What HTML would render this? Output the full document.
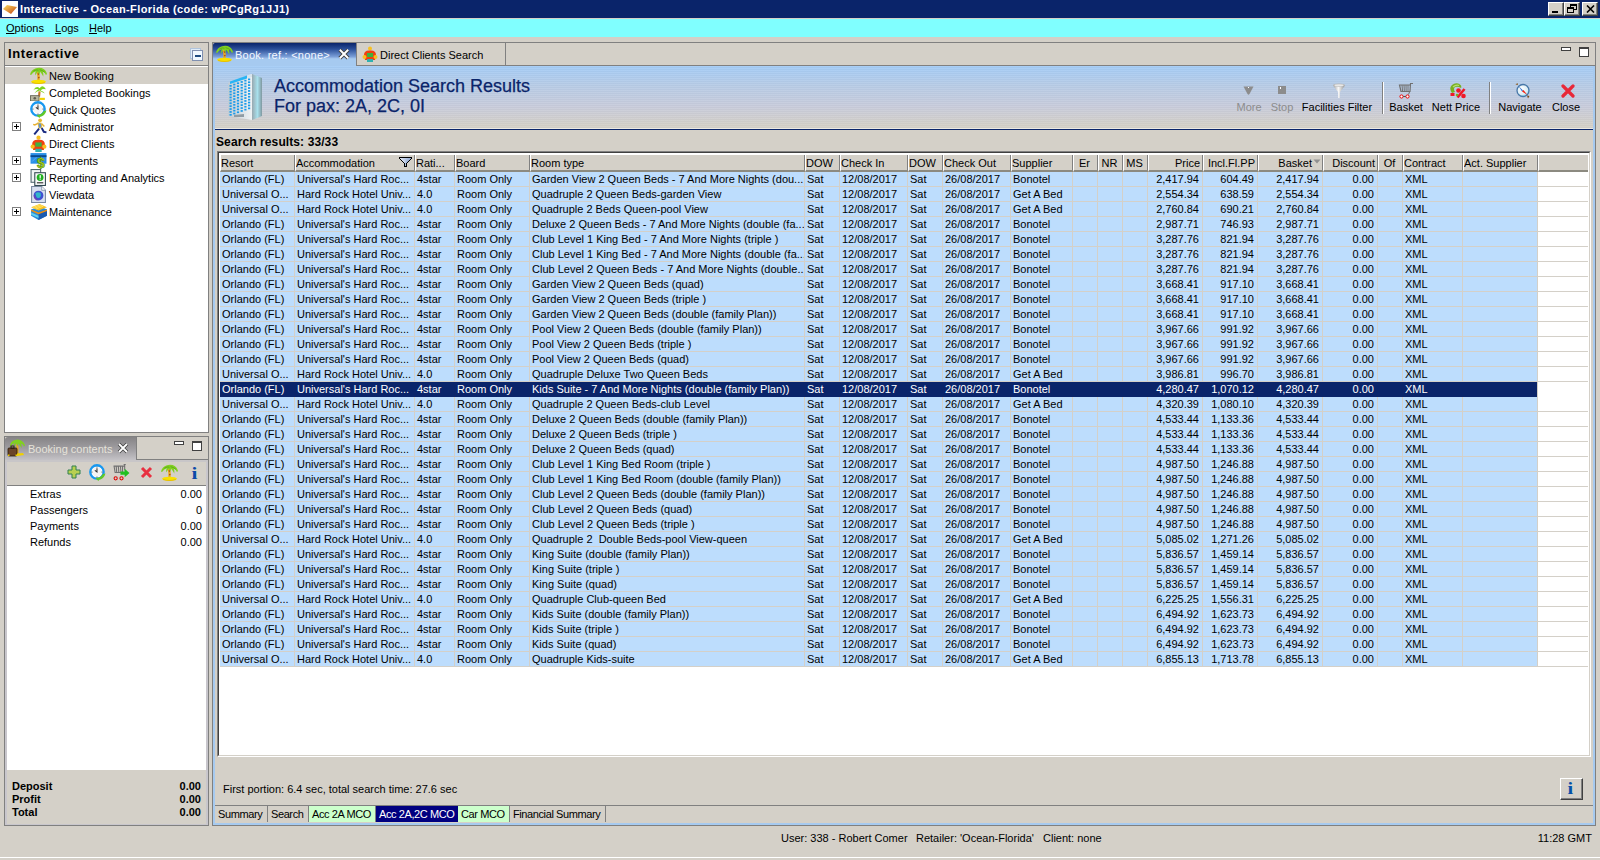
<!DOCTYPE html>
<html><head><meta charset="utf-8"><title>Interactive</title>
<style>
*{margin:0;padding:0;box-sizing:border-box}
html,body{width:1600px;height:860px;overflow:hidden}
body{position:relative;background:#D4D0C8;font-family:"Liberation Sans",sans-serif;font-size:11px;color:#000;line-height:14px}
.a{position:absolute}
i,em{font-style:normal}
u{text-decoration:underline}
/* title bar */
#tb{left:0;top:0;width:1600px;height:18px;background:#0A246A}
#tt{left:20px;top:2px;color:#fff;font-weight:bold;font-size:11px;letter-spacing:0.4px;white-space:nowrap}
.wb{top:2px;width:16px;height:14px;background:#D4D0C8;border-top:1px solid #fff;border-left:1px solid #fff;border-right:1px solid #404040;border-bottom:1px solid #404040;box-shadow:inset -1px -1px 0 #808080}
#mb{left:0;top:19px;width:1600px;height:18px;background:#80FFFF}
.mi{top:21px;white-space:nowrap}
/* panels */
.pb{border:1px solid #808080}
#p1{left:4px;top:42px;width:205px;height:391px;background:#D4D0C8}
#p1h{left:8px;top:47px;font-weight:bold;font-size:13px;letter-spacing:0.6px}
#tree{left:5px;top:65px;width:203px;height:367px;background:#fff;border-top:1px solid #808080}
.ti{left:49px;white-space:nowrap;line-height:14px}
.pl{left:12px;width:9px;height:9px;border:1px solid #808080;background:#fff}
.pl:before{content:"";position:absolute;left:1px;top:3px;width:5px;height:1px;background:#000}
.pl:after{content:"";position:absolute;left:3px;top:1px;width:1px;height:5px;background:#000}
#p2{left:4px;top:436px;width:205px;height:390px;background:#D4D0C8}
/* editor */
#ed{left:212px;top:42px;width:1384px;height:784px;background:#D4D0C8}
#edin{left:213px;top:66px;width:1382px;height:759px;border-left:2px solid #A6CAF0;border-right:2px solid #A6CAF0;border-bottom:2px solid #A6CAF0}
#hdrg{left:215px;top:66px;width:1378px;height:63px;background:linear-gradient(#A4CCF6 0px,#B8CCE6 20px,#C8CCDC 40px,#D4D0C8 60px)}
#hdrg:after{content:"";position:absolute;left:0;top:0;right:0;bottom:0;background:repeating-linear-gradient(rgba(255,255,255,0.06) 0 1px,rgba(0,0,0,0.02) 1px 2px)}
.tl{color:#0A246A;font-size:18px;white-space:nowrap;line-height:20px;-webkit-text-stroke:0.25px #0A246A}
.tbt{top:100px;white-space:nowrap;text-align:center}
/* table */
#tbl{left:217px;top:151px;width:1374px;height:606px;background:#fff;border-top:1px solid #808080;border-left:1px solid #808080;border-right:1px solid #fff;border-bottom:1px solid #fff}
#tbli{position:absolute;left:0;top:0;width:1372px;height:604px;border-top:1px solid #404040;border-left:1px solid #404040;border-right:1px solid #D4D0C8;border-bottom:1px solid #D4D0C8}
#thead{left:220px;top:154px;width:1368px;height:18px}
.h{position:absolute;top:0;height:18px;background:#D4D0C8;border-top:1px solid #fff;border-left:1px solid #fff;border-bottom:2px solid #8C8A80;padding:1px 3px 0 0;white-space:nowrap;overflow:hidden;line-height:14px}
.h:after{content:"";position:absolute;right:0;top:0;width:1px;bottom:0;background:#808080}
#rows{left:220px;top:172px;width:1368px;height:495px}
.row{position:absolute;left:0;width:1368px;height:15px;background:linear-gradient(90deg,#BDDDFD 1317px,#fff 1317px);border-bottom:1px solid #D4D0C8}
.row i{position:absolute;top:0;height:14px;padding:1px 3px 0 2px;white-space:nowrap;overflow:hidden;line-height:13px}
.row.sel{width:1317px;background:#0A246A;color:#fff;border-bottom-color:#0A246A;z-index:2}
#vg b{position:absolute;top:0;width:1px;height:495px;background:#D4D0C8;z-index:1}
.l{text-align:left}.r{text-align:right}.c{text-align:center}
.c0{left:0px;width:74px}
.h.c0{width:75px}
.c1{left:75px;width:119px}
.h.c1{width:120px}
.c2{left:195px;width:39px}
.h.c2{width:40px}
.c3{left:235px;width:74px}
.h.c3{width:75px}
.c4{left:310px;width:274px}
.h.c4{width:275px}
.c5{left:585px;width:34px}
.h.c5{width:35px}
.c6{left:620px;width:67px}
.h.c6{width:68px}
.c7{left:688px;width:34px}
.h.c7{width:35px}
.c8{left:723px;width:67px}
.h.c8{width:68px}
.c9{left:791px;width:61px}
.h.c9{width:62px}
.c10{left:853px;width:24px}
.h.c10{width:25px}
.c11{left:878px;width:24px}
.h.c11{width:25px}
.c12{left:903px;width:24px}
.h.c12{width:25px}
.c13{left:928px;width:54px}
.h.c13{width:55px}
.c14{left:983px;width:54px}
.h.c14{width:55px}
.c15{left:1038px;width:64px}
.h.c15{width:65px}
.c16{left:1103px;width:54px}
.h.c16{width:55px}
.c17{left:1158px;width:24px}
.h.c17{width:25px}
.c18{left:1183px;width:59px}
.h.c18{width:60px}
.c19{left:1243px;width:74px}
.h.c19{width:75px}
.c20{left:1318px;width:50px}
.h.c20{width:51px}
.h.c20{width:50px}.h.c20:after{display:none}
.row .c0,.h.c0{}
.btab{top:806px;height:16px;padding:1px 0 0 3px;white-space:nowrap;border-right:1px solid #808080;line-height:14px;letter-spacing:-0.4px;overflow:hidden}
.ic{position:absolute}
</style></head><body>

<!-- title bar -->
<div class="a" id="tb"></div>
<div class="a" style="left:2px;top:1px;width:16px;height:16px;background:#fff"></div>
<svg class="a" style="left:2px;top:2px" width="16" height="14" viewBox="0 0 16 14"><defs><linearGradient id="og" x1="0" y1="0" x2="1" y2="1"><stop offset="0" stop-color="#FFE060"/><stop offset="1" stop-color="#C04010"/></linearGradient></defs><path d="M1 7 L5 3 L15 5 L9 12 Z" fill="url(#og)"/></svg>
<div class="a" id="tt">Interactive - Ocean-Florida (code: wPCgRg1JJ1)</div>
<div class="a wb" style="left:1548px"><div class="a" style="left:3px;top:8px;width:6px;height:2px;background:#000"></div></div>
<div class="a wb" style="left:1564px"><div class="a" style="left:5px;top:1px;width:7px;height:6px;border:1px solid #000;border-top-width:2px"></div><div class="a" style="left:2px;top:4px;width:7px;height:6px;border:1px solid #000;border-top-width:2px;background:#D4D0C8"></div></div>
<div class="a wb" style="left:1582px"><svg class="a" style="left:3px;top:2px" width="9" height="8" viewBox="0 0 9 8"><path d="M1 0.5 L8 7.5 M8 0.5 L1 7.5" stroke="#000" stroke-width="1.6"/></svg></div>

<!-- menu -->
<div class="a" id="mb"></div>
<div class="a mi" style="left:6px"><u>O</u>ptions</div>
<div class="a mi" style="left:55px"><u>L</u>ogs</div>
<div class="a mi" style="left:89px"><u>H</u>elp</div>

<!-- left panel 1 -->
<div class="a pb" id="p1"></div>
<div class="a" id="p1h">Interactive</div>
<div class="a" style="left:190px;top:48px;width:11px;height:11px;border:1px solid #B0C4DC;background:#E0ECF8"></div>
<div class="a" style="left:192px;top:50px;width:11px;height:11px;border:1px solid #8090B0;background:#F0F8FF"><div class="a" style="left:2px;top:4px;width:6px;height:2px;background:#1F4B80"></div></div>
<div class="a" id="tree"></div>
<div class="a" style="left:5px;top:67px;width:203px;height:17px;background:#D4D0C8"></div>
<svg class="a" style="left:30px;top:67px" width="17" height="17" viewBox="0 0 16 16"><g><path d="M7 4 Q8.5 8 8 13" stroke="#E8A820" stroke-width="2.2" fill="none"/><path d="M7.5 6 L8.5 7 M8 9.5 L8.6 10.5" stroke="#A04010" stroke-width="1.2"/><path d="M0 7 Q1 3 5 1.5 Q8 0 11 1 Q15 2.5 16 6.5 L15 7.5 Q14 5 12 4.5 Q13 7 12.5 9 Q11 6 9.5 4.5 Q9 7 8.5 7 Q8 5 7 4.5 Q6 6 5 8 Q4.5 5.5 5.5 4 Q3 4.5 1 7.5Z" fill="#80D020"/><path d="M3 4 Q6 2 8 3 M9 2.5 Q12 3 14 5" stroke="#58A818" stroke-width="0.8" fill="none"/><ellipse cx="8" cy="13.8" rx="7" ry="1.9" fill="#F8E000"/><path d="M2 14.5 Q8 16.5 14 14.5" stroke="#E8C000" stroke-width="1" fill="none"/></g></svg>
<div class="a ti" style="top:69px">New Booking</div>
<svg class="a" style="left:30px;top:84px" width="17" height="17" viewBox="0 0 16 16"><g><path d="M9 7 L8.5 12" stroke="#C87820" stroke-width="2"/><path d="M3 6 Q6 1 9 4 Q12 0 15 5 Q12 4 10 6 Q13 7 14 9 Q10 7 9 6 Q6 7 4 9 Q5 7 8 5 Q5 4 3 6Z" fill="#7ED320"/><rect x="0.5" y="11" width="8" height="5" fill="#B8B8A0" stroke="#606050" stroke-width="0.8"/><circle cx="4.5" cy="13.5" r="1.2" fill="#606050"/><rect x="9" y="13" width="5" height="2" fill="#F0D000"/></g></svg>
<div class="a ti" style="top:86px">Completed Bookings</div>
<svg class="a" style="left:30px;top:101px" width="17" height="17" viewBox="0 0 16 16"><g><circle cx="7.5" cy="7.5" r="6.3" fill="#fff" stroke="#1898F0" stroke-width="2.2"/><circle cx="7.5" cy="7.5" r="4.5" fill="#F4F4F4"/><path d="M7.5 4 V7.5 L5.5 6" stroke="#303030" stroke-width="1" fill="none"/><circle cx="7.5" cy="2.8" r=".5" fill="#333"/><circle cx="7.5" cy="12.2" r=".5" fill="#333"/><circle cx="2.8" cy="7.5" r=".5" fill="#333"/><circle cx="12.2" cy="7.5" r=".5" fill="#333"/><path d="M6 13.5 Q11 13 13 9.5 L15.5 9 Q14 14.5 9 15 L9.5 16.5 Z" fill="#60C828"/></g></svg>
<div class="a ti" style="top:103px">Quick Quotes</div>
<svg class="a" style="left:30px;top:118px" width="17" height="17" viewBox="0 0 16 16"><g><circle cx="9.5" cy="2.2" r="1.8" fill="#E8B830"/><path d="M7 4 L11 4.5 L11.5 9.5 L8 10 Z" fill="#E8C040"/><path d="M8 5 L10.5 5.5 L10.5 9 L8.5 9.2Z" fill="#6090D0"/><path d="M7.5 5 L4.5 6.5 L3 6" stroke="#E8B030" stroke-width="1.4" fill="none"/><path d="M11 5.5 L13.5 8" stroke="#E8B030" stroke-width="1.4"/><path d="M11 9.5 L13 13 L15.5 13.5" stroke="#1A2A80" stroke-width="1.8" fill="none"/><path d="M8.5 10 L6 13 L4 15.5" stroke="#1A2A80" stroke-width="1.8" fill="none"/></g></svg>
<div class="a ti" style="top:120px">Administrator</div>
<div class="a pl" style="top:122px"></div>
<svg class="a" style="left:30px;top:135px" width="17" height="17" viewBox="0 0 16 16"><g><circle cx="8" cy="2.5" r="2" fill="#F8C020"/><path d="M2 9 Q2 4 8 4.5 Q14 4 14 9 L13 14 L3 14Z" fill="#F04010"/><rect x="5" y="7" width="6" height="4" fill="#40B040"/><rect x="5" y="13" width="6" height="3" fill="#30B0B0"/><circle cx="2.5" cy="11" r="2" fill="#F8C020"/><circle cx="13.5" cy="11" r="2" fill="#F8C020"/></g></svg>
<div class="a ti" style="top:137px">Direct Clients</div>
<svg class="a" style="left:30px;top:152px" width="17" height="17" viewBox="0 0 16 16"><g><rect x="0.5" y="1" width="15" height="10" fill="#2A90E8"/><rect x="0.5" y="3" width="15" height="1.8" fill="#0A4A90"/><path d="M2 9 L6 5" stroke="#60B0F0" stroke-width=".8"/><text x="6.5" y="15.5" font-size="13" font-weight="bold" fill="#B0D820" stroke="#58900A" stroke-width=".6" font-family="Liberation Sans">$</text></g></svg>
<div class="a ti" style="top:154px">Payments</div>
<div class="a pl" style="top:156px"></div>
<svg class="a" style="left:30px;top:169px" width="17" height="17" viewBox="0 0 16 16"><g><rect x="1" y="0.5" width="9" height="12" fill="#F0F4F4" stroke="#506870"/><rect x="4.5" y="3.5" width="10" height="12" fill="#F8FAFA" stroke="#304850"/><circle cx="9.5" cy="8" r="3.2" fill="#20B020"/><rect x="9" y="5.8" width="1.2" height="2.6" fill="#fff"/><rect x="9" y="9" width="1.2" height="1" fill="#fff"/><rect x="6.5" y="12.5" width="6" height="1" fill="#202020"/></g></svg>
<div class="a ti" style="top:171px">Reporting and Analytics</div>
<div class="a pl" style="top:173px"></div>
<svg class="a" style="left:30px;top:186px" width="17" height="17" viewBox="0 0 16 16"><g><path d="M1.5 0.5 H11 L14.5 4 V15.5 H1.5Z" fill="#D8E0F0" stroke="#7888A0"/><path d="M11 0.5 V4 H14.5" fill="#fff" stroke="#7888A0" stroke-width=".7"/><circle cx="8" cy="9" r="4.6" fill="#4050D0"/><path d="M5 7 Q7 5 10 6.5 Q11 9 9 11 Q7 12 6 10Z" fill="#30B8C8"/><path d="M4 9 Q4 12 7 13.5" stroke="#7040B0" stroke-width="1" fill="none"/></g></svg>
<div class="a ti" style="top:188px">Viewdata</div>
<svg class="a" style="left:30px;top:203px" width="17" height="17" viewBox="0 0 16 16"><g><path d="M1 6 L9 3 L16 6 L16 12 L8 16 L1 12Z" fill="#2A8AD8"/><path d="M8 9 L16 6 L16 12 L8 16Z" fill="#1A5AB0"/><path d="M1 9 L8 12 L8 14 L1 11Z" fill="#60D0F0"/><path d="M1 4 L9 1 L16 4 L8 7Z" fill="#F8C020"/><path d="M1 6 L8 9 L16 6 L16 7.5 L8 10.5 L1 7.5Z" fill="#F09010"/><path d="M2.5 4.3 L9.5 1.6 M4 5 L11 2.3 M5.5 5.7 L12.5 3" stroke="#FFE870" stroke-width=".8"/></g></svg>
<div class="a ti" style="top:205px">Maintenance</div>
<div class="a pl" style="top:207px"></div>

<!-- left panel 2 -->
<div class="a pb" id="p2"></div>

<div class="a" style="left:5px;top:437px;width:131px;height:23px;background:linear-gradient(#858385 0px,#A09EA2 12px,#C4C2C6 23px);border-top-left-radius:3px"></div>
<svg class="a" style="left:7px;top:439px" width="18" height="18" viewBox="0 0 18 18"><path d="M10 5 Q11 9 10.5 15" stroke="#E8A820" stroke-width="2" fill="none"/><path d="M3 6 Q4 2 8 1 Q11 0 13 1 Q17 2.5 18 6.5 L17 7.5 Q16 5 14 4.5 Q15 7 14.5 9 Q13 6 11.5 4.5 Q11 7 10.5 7 Q10 5 9 4.5 Q8 6 7 8 Q6.5 5.5 7.5 4 Q5 4.5 3.5 7.5Z" fill="#80D020"/><rect x="1" y="9" width="9" height="8" rx="1" fill="#6A4428" stroke="#2A1A08" stroke-width="0.8"/><rect x="4" y="7" width="3" height="2.2" fill="none" stroke="#2A1A08" stroke-width="0.9"/><rect x="1" y="15.5" width="1.5" height="1.5" fill="#F0D000"/><rect x="8.5" y="15.5" width="1.5" height="1.5" fill="#F0D000"/><path d="M10 14.5 L16 14 L17 16 L10 17Z" fill="#F0D000"/></svg>
<div class="a" style="left:28px;top:442px;color:#E6E3DA;white-space:nowrap">Booking contents</div>
<svg class="a" style="left:117px;top:442px" width="12" height="12" viewBox="0 0 12 12"><path d="M2 2 L10 10 M10 2 L2 10" stroke="#404040" stroke-width="3.4"/><path d="M2 2 L10 10 M10 2 L2 10" stroke="#fff" stroke-width="1.8"/></svg>
<div class="a" style="left:136px;top:437px;width:72px;height:23px;border-left:1px solid #808080;border-bottom:1px solid #808080;border-top-right-radius:3px;background:#D4D0C8"></div>
<div class="a" style="left:174px;top:441px;width:10px;height:4px;border:1px solid #404040;background:#fff"></div>
<div class="a" style="left:192px;top:441px;width:10px;height:10px;border:1px solid #404040;border-top-width:2px;background:#fff"></div>
<div class="a" style="left:5px;top:460px;width:203px;height:2px;background:#C8C6C8"></div>
<div class="a" style="left:5px;top:462px;width:2px;height:363px;background:#C8C6CC"></div><div class="a" style="left:5px;top:824px;width:203px;height:1px;background:#C8C6CC"></div>
<div class="a" style="left:206px;top:462px;width:2px;height:363px;background:#C8C6CC"></div>
<div class="a" style="left:7px;top:485px;width:199px;height:1px;background:#808080"></div>
<div class="a" style="left:7px;top:486px;width:199px;height:284px;background:#fff"></div>
<svg class="a" style="left:67px;top:465px" width="14" height="14" viewBox="0 0 14 14"><path d="M5 1 H9 V5 H13 V9 H9 V13 H5 V9 H1 V5 H5Z" fill="#B8D050" stroke="#308050" stroke-width="1"/></svg>
<svg class="a" style="left:89px;top:464px" width="17" height="17" viewBox="0 0 16 16"><circle cx="7.5" cy="7.5" r="6.3" fill="#fff" stroke="#1898F0" stroke-width="2.2"/><circle cx="7.5" cy="7.5" r="4.5" fill="#F4F4F4"/><path d="M7.5 4 V7.5 L5.5 6" stroke="#303030" stroke-width="1" fill="none"/><circle cx="7.5" cy="2.8" r=".5" fill="#333"/><circle cx="7.5" cy="12.2" r=".5" fill="#333"/><circle cx="2.8" cy="7.5" r=".5" fill="#333"/><circle cx="12.2" cy="7.5" r=".5" fill="#333"/><path d="M6 13.5 Q11 13 13 9.5 L15.5 9 Q14 14.5 9 15 L9.5 16.5 Z" fill="#60C828"/></svg>
<svg class="a" style="left:113px;top:464px" width="17" height="17" viewBox="0 0 16 16"><path d="M0.5 2 L11 2 M10 0.5 L12 0.5 M11 0.5 L11 6 M1 2 L2 8 L10 8 M3 2 L3.5 8 M5 2 L5.5 8 M7 2 L7.5 8 M9 2 L9 8" stroke="#707070" fill="none"/><circle cx="2.5" cy="13.5" r="1.5" stroke="#E00000" fill="none"/><circle cx="8" cy="13.5" r="1.5" stroke="#E00000" fill="none"/><path d="M7 7 H11 V4.5 L15.5 8.5 L11 12.5 V10 H7Z" fill="#20C020"/></svg>
<svg class="a" style="left:140px;top:466px" width="13" height="13" viewBox="0 0 13 13"><path d="M2 2 L11 11 M11 2 L2 11" stroke="#E83040" stroke-width="3"/></svg>
<svg class="a" style="left:161px;top:464px" width="17" height="17" viewBox="0 0 16 16"><g><path d="M7 4 Q8.5 8 8 13" stroke="#E8A820" stroke-width="2.2" fill="none"/><path d="M7.5 6 L8.5 7 M8 9.5 L8.6 10.5" stroke="#A04010" stroke-width="1.2"/><path d="M0 7 Q1 3 5 1.5 Q8 0 11 1 Q15 2.5 16 6.5 L15 7.5 Q14 5 12 4.5 Q13 7 12.5 9 Q11 6 9.5 4.5 Q9 7 8.5 7 Q8 5 7 4.5 Q6 6 5 8 Q4.5 5.5 5.5 4 Q3 4.5 1 7.5Z" fill="#80D020"/><path d="M3 4 Q6 2 8 3 M9 2.5 Q12 3 14 5" stroke="#58A818" stroke-width="0.8" fill="none"/><ellipse cx="8" cy="13.8" rx="7" ry="1.9" fill="#F8E000"/><path d="M2 14.5 Q8 16.5 14 14.5" stroke="#E8C000" stroke-width="1" fill="none"/></g></svg>
<div class="a" style="left:192px;top:465px;color:#0A4AA8;font-weight:bold;font-family:'Liberation Serif',serif;font-size:17px;line-height:18px;transform:scaleX(1.25)">i</div>
<div class="a" style="left:30px;top:487px;white-space:nowrap">Extras</div><div class="a" style="left:100px;width:102px;text-align:right;top:487px">0.00</div>
<div class="a" style="left:30px;top:503px;white-space:nowrap">Passengers</div><div class="a" style="left:100px;width:102px;text-align:right;top:503px">0</div>
<div class="a" style="left:30px;top:519px;white-space:nowrap">Payments</div><div class="a" style="left:100px;width:102px;text-align:right;top:519px">0.00</div>
<div class="a" style="left:30px;top:535px;white-space:nowrap">Refunds</div><div class="a" style="left:100px;width:102px;text-align:right;top:535px">0.00</div>
<div class="a" style="left:12px;top:779px;font-weight:bold;white-space:nowrap">Deposit</div><div class="a" style="left:100px;width:101px;text-align:right;font-weight:bold;top:779px">0.00</div>
<div class="a" style="left:12px;top:792px;font-weight:bold;white-space:nowrap">Profit</div><div class="a" style="left:100px;width:101px;text-align:right;font-weight:bold;top:792px">0.00</div>
<div class="a" style="left:12px;top:805px;font-weight:bold;white-space:nowrap">Total</div><div class="a" style="left:100px;width:101px;text-align:right;font-weight:bold;top:805px">0.00</div>


<!-- editor -->
<div class="a pb" id="ed"></div>

<div class="a" style="left:213px;top:43px;width:143px;height:23px;background:linear-gradient(#0A246A 0px,#2A4E98 6px,#7EA2DA 14px,#9ABCE8 15px,#A6CAF0 16px);border-top-left-radius:2px"></div>
<svg class="a" style="left:216px;top:45px" width="17" height="17" viewBox="0 0 16 16"><g><path d="M7 4 Q8.5 8 8 13" stroke="#E8A820" stroke-width="2.2" fill="none"/><path d="M7.5 6 L8.5 7 M8 9.5 L8.6 10.5" stroke="#A04010" stroke-width="1.2"/><path d="M0 7 Q1 3 5 1.5 Q8 0 11 1 Q15 2.5 16 6.5 L15 7.5 Q14 5 12 4.5 Q13 7 12.5 9 Q11 6 9.5 4.5 Q9 7 8.5 7 Q8 5 7 4.5 Q6 6 5 8 Q4.5 5.5 5.5 4 Q3 4.5 1 7.5Z" fill="#80D020"/><path d="M3 4 Q6 2 8 3 M9 2.5 Q12 3 14 5" stroke="#58A818" stroke-width="0.8" fill="none"/><ellipse cx="8" cy="13.8" rx="7" ry="1.9" fill="#F8E000"/><path d="M2 14.5 Q8 16.5 14 14.5" stroke="#E8C000" stroke-width="1" fill="none"/></g></svg>
<div class="a" style="left:235px;top:48px;color:#F4F8FF;white-space:nowrap;letter-spacing:0.25px">Book. ref.: &lt;none&gt;</div>
<svg class="a" style="left:338px;top:48px" width="12" height="12" viewBox="0 0 10 10"><path d="M1.5 1.5 L8.5 8.5 M8.5 1.5 L1.5 8.5" stroke="#404040" stroke-width="3.2"/><path d="M1.5 1.5 L8.5 8.5 M8.5 1.5 L1.5 8.5" stroke="#fff" stroke-width="1.6"/></svg>
<div class="a" style="left:356px;top:43px;width:150px;height:23px;background:#D4D0C8;border-left:1px solid #808080;border-right:1px solid #808080;border-bottom:1px solid #808080"></div>
<svg class="a" style="left:362px;top:46px" width="16" height="16" viewBox="0 0 16 16"><g><circle cx="8" cy="2.5" r="2" fill="#F8C020"/><path d="M2 9 Q2 4 8 4.5 Q14 4 14 9 L13 14 L3 14Z" fill="#F04010"/><rect x="5" y="7" width="6" height="4" fill="#40B040"/><rect x="5" y="13" width="6" height="3" fill="#30B0B0"/><circle cx="2.5" cy="11" r="2" fill="#F8C020"/><circle cx="13.5" cy="11" r="2" fill="#F8C020"/></g></svg>
<div class="a" style="left:380px;top:48px;white-space:nowrap">Direct Clients Search</div>
<div class="a" style="left:506px;top:65px;width:1089px;height:1px;background:#808080"></div>
<div class="a" style="left:1561px;top:47px;width:10px;height:4px;border:1px solid #404040;background:#fff"></div>
<div class="a" style="left:1579px;top:47px;width:10px;height:10px;border:1px solid #404040;border-top-width:2px;background:#fff"></div>

<div class="a" id="edin"></div>
<div class="a" id="hdrg"></div>
<div class="a" style="left:215px;top:128px;width:1378px;height:1px;background:#ECE9E2"></div>
<div class="a" style="left:215px;top:129px;width:1378px;height:1px;background:#0A246A"></div>
<svg class="a" style="left:226px;top:72px" width="38" height="50" viewBox="0 0 38 50"><defs><linearGradient id="bf" x1="0" x2="1"><stop offset="0" stop-color="#C0CCD4"/><stop offset="1" stop-color="#EEF2F4"/></linearGradient><linearGradient id="bs" x1="0" x2="1"><stop offset="0" stop-color="#98A8B0"/><stop offset="0.55" stop-color="#A8E0EC"/><stop offset="1" stop-color="#8098A0"/></linearGradient></defs><path d="M2 11 L26 2 L26 48 L2 44Z" fill="url(#bf)"/><path d="M26 2 L36 6 L36 44 L26 48Z" fill="url(#bs)"/><path d="M4 9.5 L21 3.5 L21 6.5 L4 12Z" fill="#28B4F4"/><path d="M21 3.5 L26 2 L26 5 L21 6.5Z" fill="#D8E4EC"/><rect x="3.5" y="13.0" width="2.2" height="1.7" fill="#1A9AEA"/><rect x="7.2" y="11.7" width="2.2" height="1.7" fill="#1A9AEA"/><rect x="10.9" y="10.4" width="2.2" height="1.7" fill="#1A9AEA"/><rect x="14.6" y="9.1" width="2.2" height="1.7" fill="#1A9AEA"/><rect x="18.3" y="7.8" width="2.2" height="1.7" fill="#1A9AEA"/><rect x="22.0" y="6.5" width="2.2" height="1.7" fill="#1A9AEA"/><rect x="3.5" y="15.9" width="2.2" height="1.7" fill="#1A9AEA"/><rect x="7.2" y="14.6" width="2.2" height="1.7" fill="#1A9AEA"/><rect x="10.9" y="13.3" width="2.2" height="1.7" fill="#1A9AEA"/><rect x="14.6" y="12.0" width="2.2" height="1.7" fill="#1A9AEA"/><rect x="18.3" y="10.7" width="2.2" height="1.7" fill="#1A9AEA"/><rect x="22.0" y="9.4" width="2.2" height="1.7" fill="#1A9AEA"/><rect x="3.5" y="18.8" width="2.2" height="1.7" fill="#1A9AEA"/><rect x="7.2" y="17.5" width="2.2" height="1.7" fill="#1A9AEA"/><rect x="10.9" y="16.2" width="2.2" height="1.7" fill="#1A9AEA"/><rect x="14.6" y="14.9" width="2.2" height="1.7" fill="#1A9AEA"/><rect x="18.3" y="13.6" width="2.2" height="1.7" fill="#1A9AEA"/><rect x="22.0" y="12.3" width="2.2" height="1.7" fill="#1A9AEA"/><rect x="3.5" y="21.7" width="2.2" height="1.7" fill="#1A9AEA"/><rect x="7.2" y="20.4" width="2.2" height="1.7" fill="#1A9AEA"/><rect x="10.9" y="19.1" width="2.2" height="1.7" fill="#1A9AEA"/><rect x="14.6" y="17.8" width="2.2" height="1.7" fill="#1A9AEA"/><rect x="18.3" y="16.5" width="2.2" height="1.7" fill="#1A9AEA"/><rect x="22.0" y="15.2" width="2.2" height="1.7" fill="#1A9AEA"/><rect x="3.5" y="24.6" width="2.2" height="1.7" fill="#1A9AEA"/><rect x="7.2" y="23.3" width="2.2" height="1.7" fill="#1A9AEA"/><rect x="10.9" y="22.0" width="2.2" height="1.7" fill="#1A9AEA"/><rect x="14.6" y="20.7" width="2.2" height="1.7" fill="#1A9AEA"/><rect x="18.3" y="19.4" width="2.2" height="1.7" fill="#1A9AEA"/><rect x="22.0" y="18.1" width="2.2" height="1.7" fill="#1A9AEA"/><rect x="3.5" y="27.5" width="2.2" height="1.7" fill="#1A9AEA"/><rect x="7.2" y="26.2" width="2.2" height="1.7" fill="#1A9AEA"/><rect x="10.9" y="24.9" width="2.2" height="1.7" fill="#1A9AEA"/><rect x="14.6" y="23.6" width="2.2" height="1.7" fill="#1A9AEA"/><rect x="18.3" y="22.3" width="2.2" height="1.7" fill="#1A9AEA"/><rect x="22.0" y="21.0" width="2.2" height="1.7" fill="#1A9AEA"/><rect x="3.5" y="30.4" width="2.2" height="1.7" fill="#1A9AEA"/><rect x="7.2" y="29.1" width="2.2" height="1.7" fill="#1A9AEA"/><rect x="10.9" y="27.8" width="2.2" height="1.7" fill="#1A9AEA"/><rect x="14.6" y="26.5" width="2.2" height="1.7" fill="#1A9AEA"/><rect x="18.3" y="25.2" width="2.2" height="1.7" fill="#1A9AEA"/><rect x="22.0" y="23.9" width="2.2" height="1.7" fill="#1A9AEA"/><rect x="3.5" y="33.3" width="2.2" height="1.7" fill="#1A9AEA"/><rect x="7.2" y="32.0" width="2.2" height="1.7" fill="#1A9AEA"/><rect x="10.9" y="30.7" width="2.2" height="1.7" fill="#1A9AEA"/><rect x="14.6" y="29.4" width="2.2" height="1.7" fill="#1A9AEA"/><rect x="18.3" y="28.1" width="2.2" height="1.7" fill="#1A9AEA"/><rect x="22.0" y="26.8" width="2.2" height="1.7" fill="#1A9AEA"/><rect x="3.5" y="36.2" width="2.2" height="1.7" fill="#1A9AEA"/><rect x="7.2" y="34.9" width="2.2" height="1.7" fill="#1A9AEA"/><rect x="10.9" y="33.6" width="2.2" height="1.7" fill="#1A9AEA"/><rect x="14.6" y="32.3" width="2.2" height="1.7" fill="#1A9AEA"/><rect x="18.3" y="31.0" width="2.2" height="1.7" fill="#1A9AEA"/><rect x="22.0" y="29.7" width="2.2" height="1.7" fill="#1A9AEA"/><rect x="3.5" y="39.1" width="2.2" height="1.7" fill="#1A9AEA"/><rect x="7.2" y="37.8" width="2.2" height="1.7" fill="#1A9AEA"/><rect x="10.9" y="36.5" width="2.2" height="1.7" fill="#1A9AEA"/><rect x="14.6" y="35.2" width="2.2" height="1.7" fill="#1A9AEA"/><rect x="18.3" y="33.9" width="2.2" height="1.7" fill="#1A9AEA"/><rect x="22.0" y="32.6" width="2.2" height="1.7" fill="#1A9AEA"/><rect x="3.5" y="42.0" width="2.2" height="1.7" fill="#1A9AEA"/><rect x="7.2" y="40.7" width="2.2" height="1.7" fill="#1A9AEA"/><rect x="10.9" y="39.4" width="2.2" height="1.7" fill="#1A9AEA"/><rect x="14.6" y="38.1" width="2.2" height="1.7" fill="#1A9AEA"/><rect x="18.3" y="36.8" width="2.2" height="1.7" fill="#1A9AEA"/><rect x="22.0" y="35.5" width="2.2" height="1.7" fill="#1A9AEA"/><path d="M8 43 L18 42 L18 45 L8 45Z" fill="#909CA4"/></svg>
<div class="a tl" style="left:274px;top:76px">Accommodation Search Results</div>
<div class="a tl" style="left:274px;top:96px">For pax: 2A, 2C, 0I</div>
<svg class="a" style="left:1243px;top:86px" width="12" height="10" viewBox="0 0 12 10"><path d="M0.5 0.5 L10.5 0.5 L6.5 8 Q5.5 9.5 4.5 8Z" fill="#8C8C8C"/><rect x="5" y="1" width="1" height="1" fill="#fff"/></svg>
<svg class="a" style="left:1278px;top:86px" width="9" height="9" viewBox="0 0 9 9" shape-rendering="crispEdges"><rect x="0" y="0" width="8" height="8" fill="#8C8C8C"/><rect x="2" y="1" width="1" height="2" fill="#fff"/></svg>
<svg class="a" style="left:1332px;top:83px" width="14" height="16" viewBox="0 0 14 16"><defs><linearGradient id="fn" x1="0" x2="1"><stop offset="0" stop-color="#A0A0A0"/><stop offset="0.45" stop-color="#F8F8F8"/><stop offset="1" stop-color="#909090"/></linearGradient></defs><ellipse cx="7" cy="2.2" rx="6" ry="1.8" fill="#B8B8B8"/><path d="M1 2.5 Q7 5 13 2.5 L8 9 L7.8 15 L6.2 15 L6 9Z" fill="url(#fn)"/><ellipse cx="7" cy="2.3" rx="4.5" ry="1" fill="#E8E8E8"/></svg>
<div class="a" style="left:1382px;top:82px;width:1px;height:32px;background:#808080"></div>
<div class="a" style="left:1383px;top:82px;width:1px;height:32px;background:#fff"></div>
<svg class="a" style="left:1398px;top:82px" width="17" height="17" viewBox="0 0 17 17"><path d="M12 1.5 H15 M12.5 1.5 L12 9.5 L3 9.5 L1.5 3 L12.5 3" stroke="#707070" stroke-width="1.2" fill="none"/><path d="M4 3 L4.5 9 M6 3 L6.3 9 M8 3 L8.1 9 M10 3 L10 9" stroke="#707070" stroke-width="1"/><path d="M11.5 10 L10.5 12.5" stroke="#707070"/><circle cx="3.5" cy="14.5" r="1.6" stroke="#F00000" stroke-width="1" fill="#fff"/><circle cx="9.5" cy="14.5" r="1.6" stroke="#F00000" stroke-width="1" fill="#fff"/><path d="M5.2 14.5 H7.8" stroke="#505050"/></svg>
<svg class="a" style="left:1449px;top:82px" width="18" height="17" viewBox="0 0 18 17"><path d="M3 11 Q-0.5 6 3 3 Q7 0 11 2.5 Q13 4 12 6 Q9 4 6 5 Q4 7 6 10Z" fill="#78B020"/><path d="M4 5 Q7 2.5 10 3.5" stroke="#B8E070" stroke-width="1.2" fill="none"/><rect x="1.5" y="11" width="4" height="3" fill="#F01828"/><circle cx="9.5" cy="8.5" r="2.3" fill="#F01828"/><circle cx="14.5" cy="14" r="2.3" fill="#F01828"/><path d="M15.5 7 L8.5 15.5" stroke="#F01828" stroke-width="2.6"/><circle cx="8" cy="13" r="1.3" fill="#78B020"/></svg>
<div class="a" style="left:1489px;top:82px;width:1px;height:32px;background:#808080"></div>
<div class="a" style="left:1490px;top:82px;width:1px;height:32px;background:#fff"></div>
<svg class="a" style="left:1514px;top:82px" width="18" height="18" viewBox="0 0 18 18"><defs><radialGradient id="cg" cx="0.4" cy="0.35" r="0.7"><stop offset="0" stop-color="#fff"/><stop offset="0.7" stop-color="#D8ECF4"/><stop offset="1" stop-color="#60C8E8"/></radialGradient></defs><circle cx="9" cy="8.5" r="6" fill="url(#cg)" stroke="#4878A8" stroke-width="1.3"/><path d="M4.5 4 L9 8.5 L8 9.5Z" fill="#3070D0"/><path d="M9 8.5 L13.5 13 L10 9.5 Z M8 9.5 L13.5 13 L9.5 8" fill="#F02010"/><path d="M1.5 2.5 L3.5 1 L4 3 Z" fill="#8A5A20"/><path d="M13 13.5 L15.5 14 L14 16.5Z" fill="#7A4A18"/></svg>
<svg class="a" style="left:1561px;top:84px" width="14" height="14" viewBox="0 0 14 14"><path d="M2 2 L12 12 M12 2 L2 12" stroke="#E82838" stroke-width="3.2" stroke-linecap="round"/></svg>
<div class="a tbt" style="left:1199px;width:100px;color:#8C8C8C">More</div>
<div class="a tbt" style="left:1232px;width:100px;color:#8C8C8C">Stop</div>
<div class="a tbt" style="left:1287px;width:100px;color:#000">Facilities Filter</div>
<div class="a tbt" style="left:1356px;width:100px;color:#000">Basket</div>
<div class="a tbt" style="left:1406px;width:100px;color:#000">Nett Price</div>
<div class="a tbt" style="left:1470px;width:100px;color:#000">Navigate</div>
<div class="a tbt" style="left:1516px;width:100px;color:#000">Close</div>

<div class="a" style="left:216px;top:135px;font-weight:bold;font-size:12px;letter-spacing:0.1px">Search results: 33/33</div>

<div class="a" id="tbl"><div id="tbli"></div></div>
<div class="a" id="thead"><div class="h c0 l">Resort</div><div class="h c1 l">Accommodation</div><div class="h c2 l">Rati...</div><div class="h c3 l">Board</div><div class="h c4 l">Room type</div><div class="h c5 l">DOW</div><div class="h c6 l">Check In</div><div class="h c7 l">DOW</div><div class="h c8 l">Check Out</div><div class="h c9 l">Supplier</div><div class="h c10 c">Er</div><div class="h c11 c">NR</div><div class="h c12 c">MS</div><div class="h c13 r">Price</div><div class="h c14 r">Incl.Fl.PP</div><div class="h c15 r" style="padding-right:11px">Basket</div><div class="h c16 r">Discount</div><div class="h c17 c">Of</div><div class="h c18 l">Contract</div><div class="h c19 l">Act. Supplier</div><div class="h c20 l"></div>
<svg class="a" style="left:179px;top:3px" width="13" height="10" viewBox="0 0 13 10" shape-rendering="crispEdges"><defs><linearGradient id="fg" x1="0" x2="1" y1="0" y2="1"><stop offset="0" stop-color="#FFFFFF"/><stop offset="1" stop-color="#7090C8"/></linearGradient></defs><rect x="0" y="0" width="13" height="1" fill="#000"/><rect x="0" y="1" width="1" height="1" fill="#000"/><rect x="12" y="1" width="1" height="1" fill="#000"/><rect x="1" y="1" width="11" height="1" fill="url(#fg)"/><rect x="1" y="2" width="1" height="1" fill="#000"/><rect x="11" y="2" width="1" height="1" fill="#000"/><rect x="2" y="2" width="9" height="1" fill="url(#fg)"/><rect x="2" y="3" width="1" height="1" fill="#000"/><rect x="10" y="3" width="1" height="1" fill="#000"/><rect x="3" y="3" width="7" height="1" fill="url(#fg)"/><rect x="3" y="4" width="1" height="1" fill="#000"/><rect x="9" y="4" width="1" height="1" fill="#000"/><rect x="4" y="4" width="5" height="1" fill="url(#fg)"/><rect x="4" y="5" width="1" height="1" fill="#000"/><rect x="8" y="5" width="1" height="1" fill="#000"/><rect x="5" y="5" width="3" height="1" fill="url(#fg)"/><rect x="5" y="6" width="1" height="1" fill="#000"/><rect x="7" y="6" width="1" height="1" fill="#000"/><rect x="6" y="6" width="1" height="1" fill="#A8C0E0"/><rect x="5" y="7" width="1" height="1" fill="#000"/><rect x="7" y="7" width="1" height="1" fill="#000"/><rect x="6" y="7" width="1" height="1" fill="#A8C0E0"/><rect x="5" y="8" width="1" height="1" fill="#000"/><rect x="7" y="8" width="1" height="1" fill="#000"/><rect x="6" y="8" width="1" height="1" fill="#A8C0E0"/><rect x="5" y="9" width="3" height="1" fill="#000"/></svg>
<svg class="a" style="left:1093px;top:5px" width="8" height="6" viewBox="0 0 8 6"><path d="M0.5 0.5 L7.5 0.5 L4 4.5Z" fill="#909090"/></svg>
</div>
<div class="a" id="rows"><div id="vg"><b style="left:74px"></b><b style="left:194px"></b><b style="left:234px"></b><b style="left:309px"></b><b style="left:584px"></b><b style="left:619px"></b><b style="left:687px"></b><b style="left:722px"></b><b style="left:790px"></b><b style="left:852px"></b><b style="left:877px"></b><b style="left:902px"></b><b style="left:927px"></b><b style="left:982px"></b><b style="left:1037px"></b><b style="left:1102px"></b><b style="left:1157px"></b><b style="left:1182px"></b><b style="left:1242px"></b><b style="left:1317px"></b></div>
<div class="row" style="top:0px"><i class="c0 l">Orlando (FL)</i><i class="c1 l">Universal's Hard Roc...</i><i class="c2 l">4star</i><i class="c3 l">Room Only</i><i class="c4 l">Garden View 2 Queen Beds - 7 And More Nights (dou...</i><i class="c5 l">Sat</i><i class="c6 l">12/08/2017</i><i class="c7 l">Sat</i><i class="c8 l">26/08/2017</i><i class="c9 l">Bonotel</i><i class="c13 r">2,417.94</i><i class="c14 r">604.49</i><i class="c15 r">2,417.94</i><i class="c16 r">0.00</i><i class="c18 l">XML</i></div>
<div class="row" style="top:15px"><i class="c0 l">Universal O...</i><i class="c1 l">Hard Rock Hotel Univ...</i><i class="c2 l">4.0</i><i class="c3 l">Room Only</i><i class="c4 l">Quadruple 2 Queen Beds-garden View</i><i class="c5 l">Sat</i><i class="c6 l">12/08/2017</i><i class="c7 l">Sat</i><i class="c8 l">26/08/2017</i><i class="c9 l">Get A Bed</i><i class="c13 r">2,554.34</i><i class="c14 r">638.59</i><i class="c15 r">2,554.34</i><i class="c16 r">0.00</i><i class="c18 l">XML</i></div>
<div class="row" style="top:30px"><i class="c0 l">Universal O...</i><i class="c1 l">Hard Rock Hotel Univ...</i><i class="c2 l">4.0</i><i class="c3 l">Room Only</i><i class="c4 l">Quadruple 2 Beds Queen-pool View</i><i class="c5 l">Sat</i><i class="c6 l">12/08/2017</i><i class="c7 l">Sat</i><i class="c8 l">26/08/2017</i><i class="c9 l">Get A Bed</i><i class="c13 r">2,760.84</i><i class="c14 r">690.21</i><i class="c15 r">2,760.84</i><i class="c16 r">0.00</i><i class="c18 l">XML</i></div>
<div class="row" style="top:45px"><i class="c0 l">Orlando (FL)</i><i class="c1 l">Universal's Hard Roc...</i><i class="c2 l">4star</i><i class="c3 l">Room Only</i><i class="c4 l">Deluxe 2 Queen Beds - 7 And More Nights (double (fa...</i><i class="c5 l">Sat</i><i class="c6 l">12/08/2017</i><i class="c7 l">Sat</i><i class="c8 l">26/08/2017</i><i class="c9 l">Bonotel</i><i class="c13 r">2,987.71</i><i class="c14 r">746.93</i><i class="c15 r">2,987.71</i><i class="c16 r">0.00</i><i class="c18 l">XML</i></div>
<div class="row" style="top:60px"><i class="c0 l">Orlando (FL)</i><i class="c1 l">Universal's Hard Roc...</i><i class="c2 l">4star</i><i class="c3 l">Room Only</i><i class="c4 l">Club Level 1 King Bed - 7 And More Nights (triple )</i><i class="c5 l">Sat</i><i class="c6 l">12/08/2017</i><i class="c7 l">Sat</i><i class="c8 l">26/08/2017</i><i class="c9 l">Bonotel</i><i class="c13 r">3,287.76</i><i class="c14 r">821.94</i><i class="c15 r">3,287.76</i><i class="c16 r">0.00</i><i class="c18 l">XML</i></div>
<div class="row" style="top:75px"><i class="c0 l">Orlando (FL)</i><i class="c1 l">Universal's Hard Roc...</i><i class="c2 l">4star</i><i class="c3 l">Room Only</i><i class="c4 l">Club Level 1 King Bed - 7 And More Nights (double (fa...</i><i class="c5 l">Sat</i><i class="c6 l">12/08/2017</i><i class="c7 l">Sat</i><i class="c8 l">26/08/2017</i><i class="c9 l">Bonotel</i><i class="c13 r">3,287.76</i><i class="c14 r">821.94</i><i class="c15 r">3,287.76</i><i class="c16 r">0.00</i><i class="c18 l">XML</i></div>
<div class="row" style="top:90px"><i class="c0 l">Orlando (FL)</i><i class="c1 l">Universal's Hard Roc...</i><i class="c2 l">4star</i><i class="c3 l">Room Only</i><i class="c4 l">Club Level 2 Queen Beds - 7 And More Nights (double...</i><i class="c5 l">Sat</i><i class="c6 l">12/08/2017</i><i class="c7 l">Sat</i><i class="c8 l">26/08/2017</i><i class="c9 l">Bonotel</i><i class="c13 r">3,287.76</i><i class="c14 r">821.94</i><i class="c15 r">3,287.76</i><i class="c16 r">0.00</i><i class="c18 l">XML</i></div>
<div class="row" style="top:105px"><i class="c0 l">Orlando (FL)</i><i class="c1 l">Universal's Hard Roc...</i><i class="c2 l">4star</i><i class="c3 l">Room Only</i><i class="c4 l">Garden View 2 Queen Beds (quad)</i><i class="c5 l">Sat</i><i class="c6 l">12/08/2017</i><i class="c7 l">Sat</i><i class="c8 l">26/08/2017</i><i class="c9 l">Bonotel</i><i class="c13 r">3,668.41</i><i class="c14 r">917.10</i><i class="c15 r">3,668.41</i><i class="c16 r">0.00</i><i class="c18 l">XML</i></div>
<div class="row" style="top:120px"><i class="c0 l">Orlando (FL)</i><i class="c1 l">Universal's Hard Roc...</i><i class="c2 l">4star</i><i class="c3 l">Room Only</i><i class="c4 l">Garden View 2 Queen Beds (triple )</i><i class="c5 l">Sat</i><i class="c6 l">12/08/2017</i><i class="c7 l">Sat</i><i class="c8 l">26/08/2017</i><i class="c9 l">Bonotel</i><i class="c13 r">3,668.41</i><i class="c14 r">917.10</i><i class="c15 r">3,668.41</i><i class="c16 r">0.00</i><i class="c18 l">XML</i></div>
<div class="row" style="top:135px"><i class="c0 l">Orlando (FL)</i><i class="c1 l">Universal's Hard Roc...</i><i class="c2 l">4star</i><i class="c3 l">Room Only</i><i class="c4 l">Garden View 2 Queen Beds (double (family Plan))</i><i class="c5 l">Sat</i><i class="c6 l">12/08/2017</i><i class="c7 l">Sat</i><i class="c8 l">26/08/2017</i><i class="c9 l">Bonotel</i><i class="c13 r">3,668.41</i><i class="c14 r">917.10</i><i class="c15 r">3,668.41</i><i class="c16 r">0.00</i><i class="c18 l">XML</i></div>
<div class="row" style="top:150px"><i class="c0 l">Orlando (FL)</i><i class="c1 l">Universal's Hard Roc...</i><i class="c2 l">4star</i><i class="c3 l">Room Only</i><i class="c4 l">Pool View 2 Queen Beds (double (family Plan))</i><i class="c5 l">Sat</i><i class="c6 l">12/08/2017</i><i class="c7 l">Sat</i><i class="c8 l">26/08/2017</i><i class="c9 l">Bonotel</i><i class="c13 r">3,967.66</i><i class="c14 r">991.92</i><i class="c15 r">3,967.66</i><i class="c16 r">0.00</i><i class="c18 l">XML</i></div>
<div class="row" style="top:165px"><i class="c0 l">Orlando (FL)</i><i class="c1 l">Universal's Hard Roc...</i><i class="c2 l">4star</i><i class="c3 l">Room Only</i><i class="c4 l">Pool View 2 Queen Beds (triple )</i><i class="c5 l">Sat</i><i class="c6 l">12/08/2017</i><i class="c7 l">Sat</i><i class="c8 l">26/08/2017</i><i class="c9 l">Bonotel</i><i class="c13 r">3,967.66</i><i class="c14 r">991.92</i><i class="c15 r">3,967.66</i><i class="c16 r">0.00</i><i class="c18 l">XML</i></div>
<div class="row" style="top:180px"><i class="c0 l">Orlando (FL)</i><i class="c1 l">Universal's Hard Roc...</i><i class="c2 l">4star</i><i class="c3 l">Room Only</i><i class="c4 l">Pool View 2 Queen Beds (quad)</i><i class="c5 l">Sat</i><i class="c6 l">12/08/2017</i><i class="c7 l">Sat</i><i class="c8 l">26/08/2017</i><i class="c9 l">Bonotel</i><i class="c13 r">3,967.66</i><i class="c14 r">991.92</i><i class="c15 r">3,967.66</i><i class="c16 r">0.00</i><i class="c18 l">XML</i></div>
<div class="row" style="top:195px"><i class="c0 l">Universal O...</i><i class="c1 l">Hard Rock Hotel Univ...</i><i class="c2 l">4.0</i><i class="c3 l">Room Only</i><i class="c4 l">Quadruple Deluxe Two Queen Beds</i><i class="c5 l">Sat</i><i class="c6 l">12/08/2017</i><i class="c7 l">Sat</i><i class="c8 l">26/08/2017</i><i class="c9 l">Get A Bed</i><i class="c13 r">3,986.81</i><i class="c14 r">996.70</i><i class="c15 r">3,986.81</i><i class="c16 r">0.00</i><i class="c18 l">XML</i></div>
<div class="row sel" style="top:210px"><i class="c0 l">Orlando (FL)</i><i class="c1 l">Universal's Hard Roc...</i><i class="c2 l">4star</i><i class="c3 l">Room Only</i><i class="c4 l">Kids Suite - 7 And More Nights (double (family Plan))</i><i class="c5 l">Sat</i><i class="c6 l">12/08/2017</i><i class="c7 l">Sat</i><i class="c8 l">26/08/2017</i><i class="c9 l">Bonotel</i><i class="c13 r">4,280.47</i><i class="c14 r">1,070.12</i><i class="c15 r">4,280.47</i><i class="c16 r">0.00</i><i class="c18 l">XML</i></div>
<div class="row" style="top:225px"><i class="c0 l">Universal O...</i><i class="c1 l">Hard Rock Hotel Univ...</i><i class="c2 l">4.0</i><i class="c3 l">Room Only</i><i class="c4 l">Quadruple 2 Queen Beds-club Level</i><i class="c5 l">Sat</i><i class="c6 l">12/08/2017</i><i class="c7 l">Sat</i><i class="c8 l">26/08/2017</i><i class="c9 l">Get A Bed</i><i class="c13 r">4,320.39</i><i class="c14 r">1,080.10</i><i class="c15 r">4,320.39</i><i class="c16 r">0.00</i><i class="c18 l">XML</i></div>
<div class="row" style="top:240px"><i class="c0 l">Orlando (FL)</i><i class="c1 l">Universal's Hard Roc...</i><i class="c2 l">4star</i><i class="c3 l">Room Only</i><i class="c4 l">Deluxe 2 Queen Beds (double (family Plan))</i><i class="c5 l">Sat</i><i class="c6 l">12/08/2017</i><i class="c7 l">Sat</i><i class="c8 l">26/08/2017</i><i class="c9 l">Bonotel</i><i class="c13 r">4,533.44</i><i class="c14 r">1,133.36</i><i class="c15 r">4,533.44</i><i class="c16 r">0.00</i><i class="c18 l">XML</i></div>
<div class="row" style="top:255px"><i class="c0 l">Orlando (FL)</i><i class="c1 l">Universal's Hard Roc...</i><i class="c2 l">4star</i><i class="c3 l">Room Only</i><i class="c4 l">Deluxe 2 Queen Beds (triple )</i><i class="c5 l">Sat</i><i class="c6 l">12/08/2017</i><i class="c7 l">Sat</i><i class="c8 l">26/08/2017</i><i class="c9 l">Bonotel</i><i class="c13 r">4,533.44</i><i class="c14 r">1,133.36</i><i class="c15 r">4,533.44</i><i class="c16 r">0.00</i><i class="c18 l">XML</i></div>
<div class="row" style="top:270px"><i class="c0 l">Orlando (FL)</i><i class="c1 l">Universal's Hard Roc...</i><i class="c2 l">4star</i><i class="c3 l">Room Only</i><i class="c4 l">Deluxe 2 Queen Beds (quad)</i><i class="c5 l">Sat</i><i class="c6 l">12/08/2017</i><i class="c7 l">Sat</i><i class="c8 l">26/08/2017</i><i class="c9 l">Bonotel</i><i class="c13 r">4,533.44</i><i class="c14 r">1,133.36</i><i class="c15 r">4,533.44</i><i class="c16 r">0.00</i><i class="c18 l">XML</i></div>
<div class="row" style="top:285px"><i class="c0 l">Orlando (FL)</i><i class="c1 l">Universal's Hard Roc...</i><i class="c2 l">4star</i><i class="c3 l">Room Only</i><i class="c4 l">Club Level 1 King Bed Room (triple )</i><i class="c5 l">Sat</i><i class="c6 l">12/08/2017</i><i class="c7 l">Sat</i><i class="c8 l">26/08/2017</i><i class="c9 l">Bonotel</i><i class="c13 r">4,987.50</i><i class="c14 r">1,246.88</i><i class="c15 r">4,987.50</i><i class="c16 r">0.00</i><i class="c18 l">XML</i></div>
<div class="row" style="top:300px"><i class="c0 l">Orlando (FL)</i><i class="c1 l">Universal's Hard Roc...</i><i class="c2 l">4star</i><i class="c3 l">Room Only</i><i class="c4 l">Club Level 1 King Bed Room (double (family Plan))</i><i class="c5 l">Sat</i><i class="c6 l">12/08/2017</i><i class="c7 l">Sat</i><i class="c8 l">26/08/2017</i><i class="c9 l">Bonotel</i><i class="c13 r">4,987.50</i><i class="c14 r">1,246.88</i><i class="c15 r">4,987.50</i><i class="c16 r">0.00</i><i class="c18 l">XML</i></div>
<div class="row" style="top:315px"><i class="c0 l">Orlando (FL)</i><i class="c1 l">Universal's Hard Roc...</i><i class="c2 l">4star</i><i class="c3 l">Room Only</i><i class="c4 l">Club Level 2 Queen Beds (double (family Plan))</i><i class="c5 l">Sat</i><i class="c6 l">12/08/2017</i><i class="c7 l">Sat</i><i class="c8 l">26/08/2017</i><i class="c9 l">Bonotel</i><i class="c13 r">4,987.50</i><i class="c14 r">1,246.88</i><i class="c15 r">4,987.50</i><i class="c16 r">0.00</i><i class="c18 l">XML</i></div>
<div class="row" style="top:330px"><i class="c0 l">Orlando (FL)</i><i class="c1 l">Universal's Hard Roc...</i><i class="c2 l">4star</i><i class="c3 l">Room Only</i><i class="c4 l">Club Level 2 Queen Beds (quad)</i><i class="c5 l">Sat</i><i class="c6 l">12/08/2017</i><i class="c7 l">Sat</i><i class="c8 l">26/08/2017</i><i class="c9 l">Bonotel</i><i class="c13 r">4,987.50</i><i class="c14 r">1,246.88</i><i class="c15 r">4,987.50</i><i class="c16 r">0.00</i><i class="c18 l">XML</i></div>
<div class="row" style="top:345px"><i class="c0 l">Orlando (FL)</i><i class="c1 l">Universal's Hard Roc...</i><i class="c2 l">4star</i><i class="c3 l">Room Only</i><i class="c4 l">Club Level 2 Queen Beds (triple )</i><i class="c5 l">Sat</i><i class="c6 l">12/08/2017</i><i class="c7 l">Sat</i><i class="c8 l">26/08/2017</i><i class="c9 l">Bonotel</i><i class="c13 r">4,987.50</i><i class="c14 r">1,246.88</i><i class="c15 r">4,987.50</i><i class="c16 r">0.00</i><i class="c18 l">XML</i></div>
<div class="row" style="top:360px"><i class="c0 l">Universal O...</i><i class="c1 l">Hard Rock Hotel Univ...</i><i class="c2 l">4.0</i><i class="c3 l">Room Only</i><i class="c4 l">Quadruple 2&nbsp; Double Beds-pool View-queen</i><i class="c5 l">Sat</i><i class="c6 l">12/08/2017</i><i class="c7 l">Sat</i><i class="c8 l">26/08/2017</i><i class="c9 l">Get A Bed</i><i class="c13 r">5,085.02</i><i class="c14 r">1,271.26</i><i class="c15 r">5,085.02</i><i class="c16 r">0.00</i><i class="c18 l">XML</i></div>
<div class="row" style="top:375px"><i class="c0 l">Orlando (FL)</i><i class="c1 l">Universal's Hard Roc...</i><i class="c2 l">4star</i><i class="c3 l">Room Only</i><i class="c4 l">King Suite (double (family Plan))</i><i class="c5 l">Sat</i><i class="c6 l">12/08/2017</i><i class="c7 l">Sat</i><i class="c8 l">26/08/2017</i><i class="c9 l">Bonotel</i><i class="c13 r">5,836.57</i><i class="c14 r">1,459.14</i><i class="c15 r">5,836.57</i><i class="c16 r">0.00</i><i class="c18 l">XML</i></div>
<div class="row" style="top:390px"><i class="c0 l">Orlando (FL)</i><i class="c1 l">Universal's Hard Roc...</i><i class="c2 l">4star</i><i class="c3 l">Room Only</i><i class="c4 l">King Suite (triple )</i><i class="c5 l">Sat</i><i class="c6 l">12/08/2017</i><i class="c7 l">Sat</i><i class="c8 l">26/08/2017</i><i class="c9 l">Bonotel</i><i class="c13 r">5,836.57</i><i class="c14 r">1,459.14</i><i class="c15 r">5,836.57</i><i class="c16 r">0.00</i><i class="c18 l">XML</i></div>
<div class="row" style="top:405px"><i class="c0 l">Orlando (FL)</i><i class="c1 l">Universal's Hard Roc...</i><i class="c2 l">4star</i><i class="c3 l">Room Only</i><i class="c4 l">King Suite (quad)</i><i class="c5 l">Sat</i><i class="c6 l">12/08/2017</i><i class="c7 l">Sat</i><i class="c8 l">26/08/2017</i><i class="c9 l">Bonotel</i><i class="c13 r">5,836.57</i><i class="c14 r">1,459.14</i><i class="c15 r">5,836.57</i><i class="c16 r">0.00</i><i class="c18 l">XML</i></div>
<div class="row" style="top:420px"><i class="c0 l">Universal O...</i><i class="c1 l">Hard Rock Hotel Univ...</i><i class="c2 l">4.0</i><i class="c3 l">Room Only</i><i class="c4 l">Quadruple Club-queen Bed</i><i class="c5 l">Sat</i><i class="c6 l">12/08/2017</i><i class="c7 l">Sat</i><i class="c8 l">26/08/2017</i><i class="c9 l">Get A Bed</i><i class="c13 r">6,225.25</i><i class="c14 r">1,556.31</i><i class="c15 r">6,225.25</i><i class="c16 r">0.00</i><i class="c18 l">XML</i></div>
<div class="row" style="top:435px"><i class="c0 l">Orlando (FL)</i><i class="c1 l">Universal's Hard Roc...</i><i class="c2 l">4star</i><i class="c3 l">Room Only</i><i class="c4 l">Kids Suite (double (family Plan))</i><i class="c5 l">Sat</i><i class="c6 l">12/08/2017</i><i class="c7 l">Sat</i><i class="c8 l">26/08/2017</i><i class="c9 l">Bonotel</i><i class="c13 r">6,494.92</i><i class="c14 r">1,623.73</i><i class="c15 r">6,494.92</i><i class="c16 r">0.00</i><i class="c18 l">XML</i></div>
<div class="row" style="top:450px"><i class="c0 l">Orlando (FL)</i><i class="c1 l">Universal's Hard Roc...</i><i class="c2 l">4star</i><i class="c3 l">Room Only</i><i class="c4 l">Kids Suite (triple )</i><i class="c5 l">Sat</i><i class="c6 l">12/08/2017</i><i class="c7 l">Sat</i><i class="c8 l">26/08/2017</i><i class="c9 l">Bonotel</i><i class="c13 r">6,494.92</i><i class="c14 r">1,623.73</i><i class="c15 r">6,494.92</i><i class="c16 r">0.00</i><i class="c18 l">XML</i></div>
<div class="row" style="top:465px"><i class="c0 l">Orlando (FL)</i><i class="c1 l">Universal's Hard Roc...</i><i class="c2 l">4star</i><i class="c3 l">Room Only</i><i class="c4 l">Kids Suite (quad)</i><i class="c5 l">Sat</i><i class="c6 l">12/08/2017</i><i class="c7 l">Sat</i><i class="c8 l">26/08/2017</i><i class="c9 l">Bonotel</i><i class="c13 r">6,494.92</i><i class="c14 r">1,623.73</i><i class="c15 r">6,494.92</i><i class="c16 r">0.00</i><i class="c18 l">XML</i></div>
<div class="row" style="top:480px"><i class="c0 l">Universal O...</i><i class="c1 l">Hard Rock Hotel Univ...</i><i class="c2 l">4.0</i><i class="c3 l">Room Only</i><i class="c4 l">Quadruple Kids-suite</i><i class="c5 l">Sat</i><i class="c6 l">12/08/2017</i><i class="c7 l">Sat</i><i class="c8 l">26/08/2017</i><i class="c9 l">Get A Bed</i><i class="c13 r">6,855.13</i><i class="c14 r">1,713.78</i><i class="c15 r">6,855.13</i><i class="c16 r">0.00</i><i class="c18 l">XML</i></div>
</div>

<div class="a" style="left:223px;top:782px;white-space:nowrap">First portion: 6.4 sec, total search time: 27.6 sec</div>

<div class="a" style="left:1560px;top:778px;width:23px;height:22px;background:#D4D0C8;border-top:1px solid #fff;border-left:1px solid #fff;border-right:1px solid #404040;border-bottom:1px solid #404040;box-shadow:inset -1px -1px 0 #808080"></div>
<div class="a" style="left:1568px;top:780px;color:#0550A8;font-weight:bold;font-family:'Liberation Serif',serif;font-size:17px;line-height:18px;transform:scaleX(1.2)">i</div>
<div class="a" style="left:215px;top:805px;width:1378px;height:1px;background:#808080"></div>
<div class="a btab" style="left:215px;width:53px;background:#D4D0C8;color:#000">Summary</div>
<div class="a btab" style="left:268px;width:41px;background:#D4D0C8;color:#000">Search</div>
<div class="a btab" style="left:309px;width:67px;background:#CCFFCC;color:#000">Acc 2A MCO</div>
<div class="a btab" style="left:376px;width:83px;background:#000080;color:#fff">Acc 2A,2C MCO</div>
<div class="a btab" style="left:458px;width:52px;background:#CCFFCC;color:#000">Car MCO</div>
<div class="a btab" style="left:510px;width:96px;background:#D4D0C8;color:#000">Financial Summary</div>


<!-- status bar -->
<div class="a" style="left:0;top:857px;width:1600px;height:1px;background:#fff"></div>
<div class="a" style="left:781px;top:831px;white-space:nowrap">User: 338 - Robert Comer</div>
<div class="a" style="left:916px;top:831px;white-space:nowrap">Retailer: 'Ocean-Florida'</div>
<div class="a" style="left:1043px;top:831px;white-space:nowrap">Client: none</div>
<div class="a" style="left:1437px;width:155px;text-align:right;top:831px;white-space:nowrap">11:28 GMT</div>
</body></html>
